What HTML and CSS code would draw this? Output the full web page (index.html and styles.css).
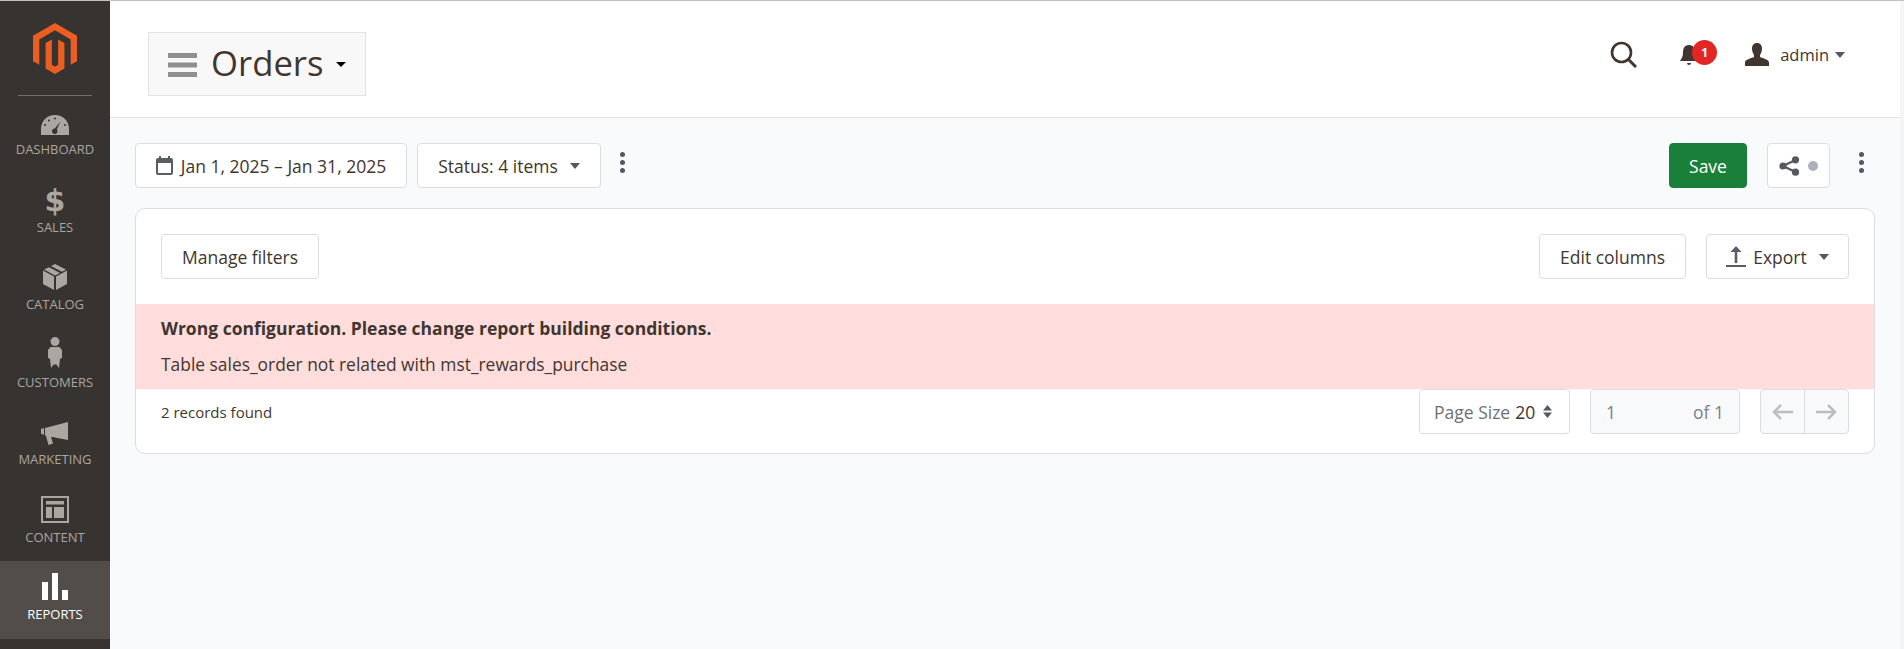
FILE: index.html
```html
<!DOCTYPE html>
<html lang="en">
<head>
	<meta charset="UTF-8">
	<title>Orders</title>
	<link rel="stylesheet" href="styles.css">
</head>
<body>
	<div class="app">
		<aside class="sidebar">
			<div class="logo">
				<svg width="44" height="51" viewBox="1.6 0 20.8 24"><path fill="#eb5e22" d="M12 24l-4.455-2.572v-12l2.97-1.715v12.001l1.485.902 1.485-.902V7.713l2.97 1.715v12L12 24zM22.391 6v12l-2.97 1.714V7.713L12 3.43 4.574 7.713v12L1.609 18V6L12 0l10.391 6z"/></svg>
			</div>
			<nav class="nav">
				<a class="nav-item">
					<svg width="28" height="20" viewBox="0 0 28 20"><path fill="#aaa6a0" fill-rule="evenodd" d="M14 0C6 0 0 6 0 14v6h28v-6C28 6 22 0 14 0zM19.500 6.500L15.800 14.300a2.800 2.800 0 1 1-2-.9zM14 2.500a1 1 0 1 1 0 2 1 1 0 0 1 0-2zM8 4.500a1 1 0 1 1 0 2 1 1 0 0 1 0-2zM4 9a1 1 0 1 1 0 2 1 1 0 0 1 0-2zM24 9a1 1 0 1 1 0 2 1 1 0 0 1 0-2z"/></svg>
					<span>DASHBOARD</span>
				</a>
				<a class="nav-item">
					<span class="dollar">$</span>
					<span>SALES</span>
				</a>
				<a class="nav-item">
					<svg width="24" height="26" viewBox="0 0 24 26"><path fill="#aaa6a0" d="M0 6.500L11 12.500V26L0 20zM24 6.500L13 12.500V26L24 20zM12 0L23 5.500 19 7.700 8 2zM6 3.200L17 9 12 11.500 1 5.500z"/></svg>
					<span>CATALOG</span>
				</a>
				<a class="nav-item">
					<svg width="16" height="31" viewBox="0 0 16 31"><path fill="#aaa6a0" d="M8 0a4.500 4.500 0 1 1 0 9 4.500 4.500 0 0 1 0-9zM3.500 10h9L15 13v8l-2 1-1 9-3-4-1 1-1-1-3 4-1-9-2-1v-8z"/></svg>
					<span>CUSTOMERS</span>
				</a>
				<a class="nav-item">
					<svg width="28" height="23" viewBox="0 0 28 23"><path fill="#aaa6a0" d="M27 0v18L10 14.800 12 21.500 7.500 23 5 14 4 13V6zM0 7l3-1v7l-3-1.500z"/></svg>
					<span>MARKETING</span>
				</a>
				<a class="nav-item">
					<svg width="28" height="27" viewBox="0 0 28 27"><path fill="#aaa6a0" fill-rule="evenodd" d="M0 0h28v27H0zM2 2v23h24V2zM5 5h18v3.500H5zM5 11h6v11H5zM13 11h10v11H13z"/></svg>
					<span>CONTENT</span>
				</a>
				<a class="nav-item active">
					<svg width="26" height="27" viewBox="0 0 26 27"><path fill="#fff" d="M0 9h6v18H0zM10 0h6v27h-6zM20 17h6v10h-6z"/></svg>
					<span>REPORTS</span>
				</a>
			</nav>
		</aside>
		<main class="main">
			<header class="header">
				<div class="title-box">
					<svg class="menu-icon" width="29" height="24" viewBox="0 0 29 24"><path fill="#8f8f8f" d="M0 0h29v5H0zM0 9.500h29v5H0zM0 19h29v5H0z"/></svg>
					<h1>Orders</h1>
					<i class="caret black"></i>
				</div>
				<div class="header-tools">
					<svg class="search" width="27" height="27" viewBox="0 0 27 27"><circle cx="11.500" cy="11.500" r="9.500" fill="none" stroke="#41362f" stroke-width="2.600"/><path d="M18.500 18.500L26 26" stroke="#41362f" stroke-width="3"/></svg>
					<div class="bell">
						<svg width="20" height="24" viewBox="0 0 20 24"><path fill="#41362f" d="M10 2c5 0 6 4 6 8 0 4 2 6 3 8H1c1-2 3-4 3-8 0-4 1-8 6-8zM8 20h4a2 2 0 0 1-4 0z"/></svg>
						<span class="badge">1</span>
					</div>
					<div class="user">
						<svg width="24" height="23" viewBox="0 0 24 23"><path fill="#41362f" d="M12 0c3.500 0 5 2.500 5 5.500 0 3-1 5-2 6.500v2c3 1.500 9 2.500 9 5.500v3.500H0V19.500c0-3 6-4 9-5.500v-2c-1-1.500-2-3.500-2-6.500C7 2.500 8.500 0 12 0z"/></svg>
						<span>admin</span>
						<i class="caret"></i>
					</div>
				</div>
			</header>
			<div class="content">
				<div class="toolbar">
					<div class="toolbar-left">
						<button class="btn date-btn">
							<svg width="17" height="19" viewBox="0 0 17 19"><path fill="#5a5d63" fill-rule="evenodd" d="M3 0h2v2h7V0h2v2h1a2 2 0 0 1 2 2v13a2 2 0 0 1-2 2H2a2 2 0 0 1-2-2V4a2 2 0 0 1 2-2h1zM2 7v10h13V7z"/></svg>
							Jan 1, 2025 – Jan 31, 2025
						</button>
						<button class="btn status-btn">Status: 4 items <i class="caret"></i></button>
						<span class="dots"><b></b><b></b><b></b></span>
					</div>
					<div class="toolbar-right">
						<button class="btn save-btn">Save</button>
						<button class="btn share-btn">
							<svg width="21" height="20" viewBox="0 0 21 20"><path fill="none" stroke="#55585e" stroke-width="2.200" d="M16.500 4L4 10 16.500 16"/><circle cx="16.500" cy="3.800" r="3.600" fill="#55585e"/><circle cx="4" cy="10" r="3.600" fill="#55585e"/><circle cx="16.500" cy="16.200" r="3.600" fill="#55585e"/></svg>
							<span class="share-dot"></span>
						</button>
						<span class="dots"><b></b><b></b><b></b></span>
					</div>
				</div>
				<section class="card">
					<div class="card-top">
						<button class="btn">Manage filters</button>
						<div class="card-actions">
							<button class="btn">Edit columns</button>
							<button class="btn export-btn">
								<svg width="20" height="21" viewBox="0 0 20 21"><path fill="#5a5d63" d="M10 0l5.500 6h-4.200v11H8.700V6H4.500zM0 19h20v2H0z"/></svg>
								Export <i class="caret"></i>
							</button>
						</div>
					</div>
					<div class="error">
						<strong>Wrong configuration. Please change report building conditions.</strong>
						<p>Table sales_order not related with mst_rewards_purchase</p>
					</div>
					<div class="card-bottom">
						<span class="records">2 records found</span>
						<div class="pager">
							<div class="page-size">Page Size <em>20</em>
								<svg width="9" height="13" viewBox="0 0 9 13"><path fill="#55585e" d="M4.500 0L9 5.500H0zM0 7.500h9L4.500 13z"/></svg>
							</div>
							<div class="page-input"><span>1</span><span>of 1</span></div>
							<div class="page-nav">
								<span><svg width="21" height="16" viewBox="0 0 21 16"><path fill="none" stroke="#bcbdc2" stroke-width="2.500" d="M21 8H2M9 1L2 8l7 7"/></svg></span>
								<span><svg width="21" height="16" viewBox="0 0 21 16"><path fill="none" stroke="#bcbdc2" stroke-width="2.500" d="M0 8h19M12 1l7 7-7 7"/></svg></span>
							</div>
						</div>
					</div>
				</section>
			</div>
		</main>
	</div>
</body>
</html>
```

FILE: styles.css
```css
* {
	box-sizing: border-box;
}
html, body {
	height: 100%;
}
body {
	margin: 0;
	overflow: hidden;
	background: #f5f5f5;
	color: #41362f;
	font-family: "Open Sans", "Liberation Sans", sans-serif;
	font-size: 17.500px;
}
.app {
	display: flex;
	height: 649px;
	border-top: 1px solid #cdbfbb;
}

/* sidebar */
.sidebar {
	width: 110px;
	flex-shrink: 0;
	background: #373330;
}
.logo {
	display: flex;
	justify-content: center;
	height: 95px;
	margin: 0 18px;
	padding-top: 22px;
	border-bottom: 1px solid #736e69;
}
.nav-item {
	display: flex;
	flex-direction: column;
	align-items: center;
	justify-content: flex-end;
	height: 77.500px;
	padding-bottom: 15.500px;
	color: #aaa6a0;
	font-size: 13px;
	line-height: 18px;
}
.nav-item svg {
	margin-bottom: 5px;
}
.nav-item.active {
	background: #524d49;
	color: #fff;
}
.dollar {
	font-family: "DejaVu Sans", sans-serif;
	font-size: 30px;
	font-weight: 700;
	line-height: 33px;
	margin-bottom: 1px;
}

/* header */
.main {
	flex: 1;
	margin-right: 4px;
	background: #f9fafc;
}
.header {
	display: flex;
	justify-content: space-between;
	height: 117px;
	padding: 31px 55px 0 38px;
	background: #fff;
	border-bottom: 1px solid #e1e1e1;
}
.title-box {
	display: flex;
	align-items: center;
	width: 218px;
	height: 64px;
	padding-left: 19px;
	background: #f8f8f8;
	border: 1px solid #e3e3e3;
}
.menu-icon {
	margin-top: 2px;
}
.title-box h1 {
	margin: 0 12px 2px 14px;
	font-size: 34.700px;
	font-weight: 400;
	line-height: 1;
}
.header-tools {
	display: flex;
	align-items: center;
	height: 27px;
	margin-top: 9px;
}
.search {
	margin-right: 42px;
}
.bell {
	position: relative;
	width: 20px;
	height: 24px;
	margin-right: 46px;
}
.badge {
	position: absolute;
	top: -3px;
	left: 13px;
	width: 25px;
	height: 25px;
	border-radius: 50%;
	background: #e22626;
	color: #fff;
	font-size: 12px;
	font-weight: 700;
	line-height: 25px;
	text-align: center;
}
.user {
	display: flex;
	align-items: center;
	font-size: 16.500px;
}
.user span {
	margin: 0 6px 0 11px;
}
.caret {
	display: inline-block;
	border-top: 6px solid #55585e;
	border-left: 5px solid transparent;
	border-right: 5px solid transparent;
}
.caret.black {
	border-top-color: #000;
	border-top-width: 5px;
}

/* toolbar */
.content {
	padding: 25px 25px 0;
}
.toolbar {
	display: flex;
	justify-content: space-between;
}
.toolbar-left, .toolbar-right {
	display: flex;
	align-items: center;
}
.btn {
	display: inline-flex;
	align-items: center;
	justify-content: center;
	height: 45px;
	padding: 0 20px;
	background: #fff;
	border: 1px solid #dcdde1;
	border-radius: 4px;
	color: #41362f;
	font-family: inherit;
	font-size: inherit;
}
.date-btn {
	width: 272px;
	padding: 0;
	gap: 8px;
	margin-right: 10px;
}
.status-btn {
	width: 184px;
	padding: 0;
}
.status-btn .caret {
	margin-left: 12px;
}
.dots {
	display: flex;
	flex-direction: column;
	gap: 3px;
	margin: -6px 0 0 19px;
}
.dots b {
	width: 5px;
	height: 5px;
	border-radius: 50%;
	background: #55585e;
}
.save-btn {
	width: 78px;
	padding: 0;
	background: #1a8039;
	border-color: #1a8039;
	color: #fff;
	margin-right: 20px;
}
.share-btn {
	width: 63px;
	padding: 0;
	gap: 8px;
}
.share-dot {
	width: 10px;
	height: 10px;
	border-radius: 50%;
	background: #adb0bb;
}
.toolbar-right .dots {
	margin: -6px 11px 0 29px;
}

/* card */
.card {
	margin-top: 20px;
	height: 246px;
	background: #fff;
	border: 1px solid #dcdde1;
	border-radius: 10px;
	overflow: hidden;
}
.card-top {
	display: flex;
	justify-content: space-between;
	padding: 25px 25px 25px;
}
.card-actions {
	display: flex;
	gap: 20px;
}
.export-btn {
	width: 143px;
	padding: 0;
	gap: 7px;
}
.export-btn .caret {
	margin-left: 5px;
}
.error {
	height: 85px;
	padding: 13px 25px;
	background: #ffdddc;
	line-height: 22px;
}
.error strong {
	display: block;
	font-weight: 700;
}
.error p {
	margin: 14px 0 0;
	font-size: 17.400px;
}
.card-bottom {
	display: flex;
	justify-content: space-between;
	padding: 0 25px;
}
.records {
	margin-top: 14px;
	font-size: 15px;
	line-height: 19px;
}
.pager {
	display: flex;
	gap: 20px;
}
.page-size {
	display: flex;
	align-items: center;
	gap: 5px;
	width: 151px;
	height: 45px;
	padding-left: 14px;
	border: 1px solid #dcdde1;
	border-radius: 4px;
	color: #6d7078;
}
.page-size em {
	color: #41362f;
	font-style: normal;
}
.page-size svg {
	margin-left: 3px;
}
.page-input {
	display: flex;
	align-items: center;
	justify-content: space-between;
	width: 150px;
	height: 45px;
	padding: 0 15px;
	background: #f8f9fb;
	border: 1px solid #dcdde1;
	border-radius: 4px;
	color: #7d8087;
}
.page-nav {
	display: flex;
	width: 89px;
	height: 45px;
	background: #f8f9fb;
	border: 1px solid #dcdde1;
	border-radius: 4px;
}
.page-nav span {
	display: flex;
	align-items: center;
	justify-content: center;
	flex: 1;
}
.page-nav span + span {
	border-left: 1px solid #dcdde1;
}
```
